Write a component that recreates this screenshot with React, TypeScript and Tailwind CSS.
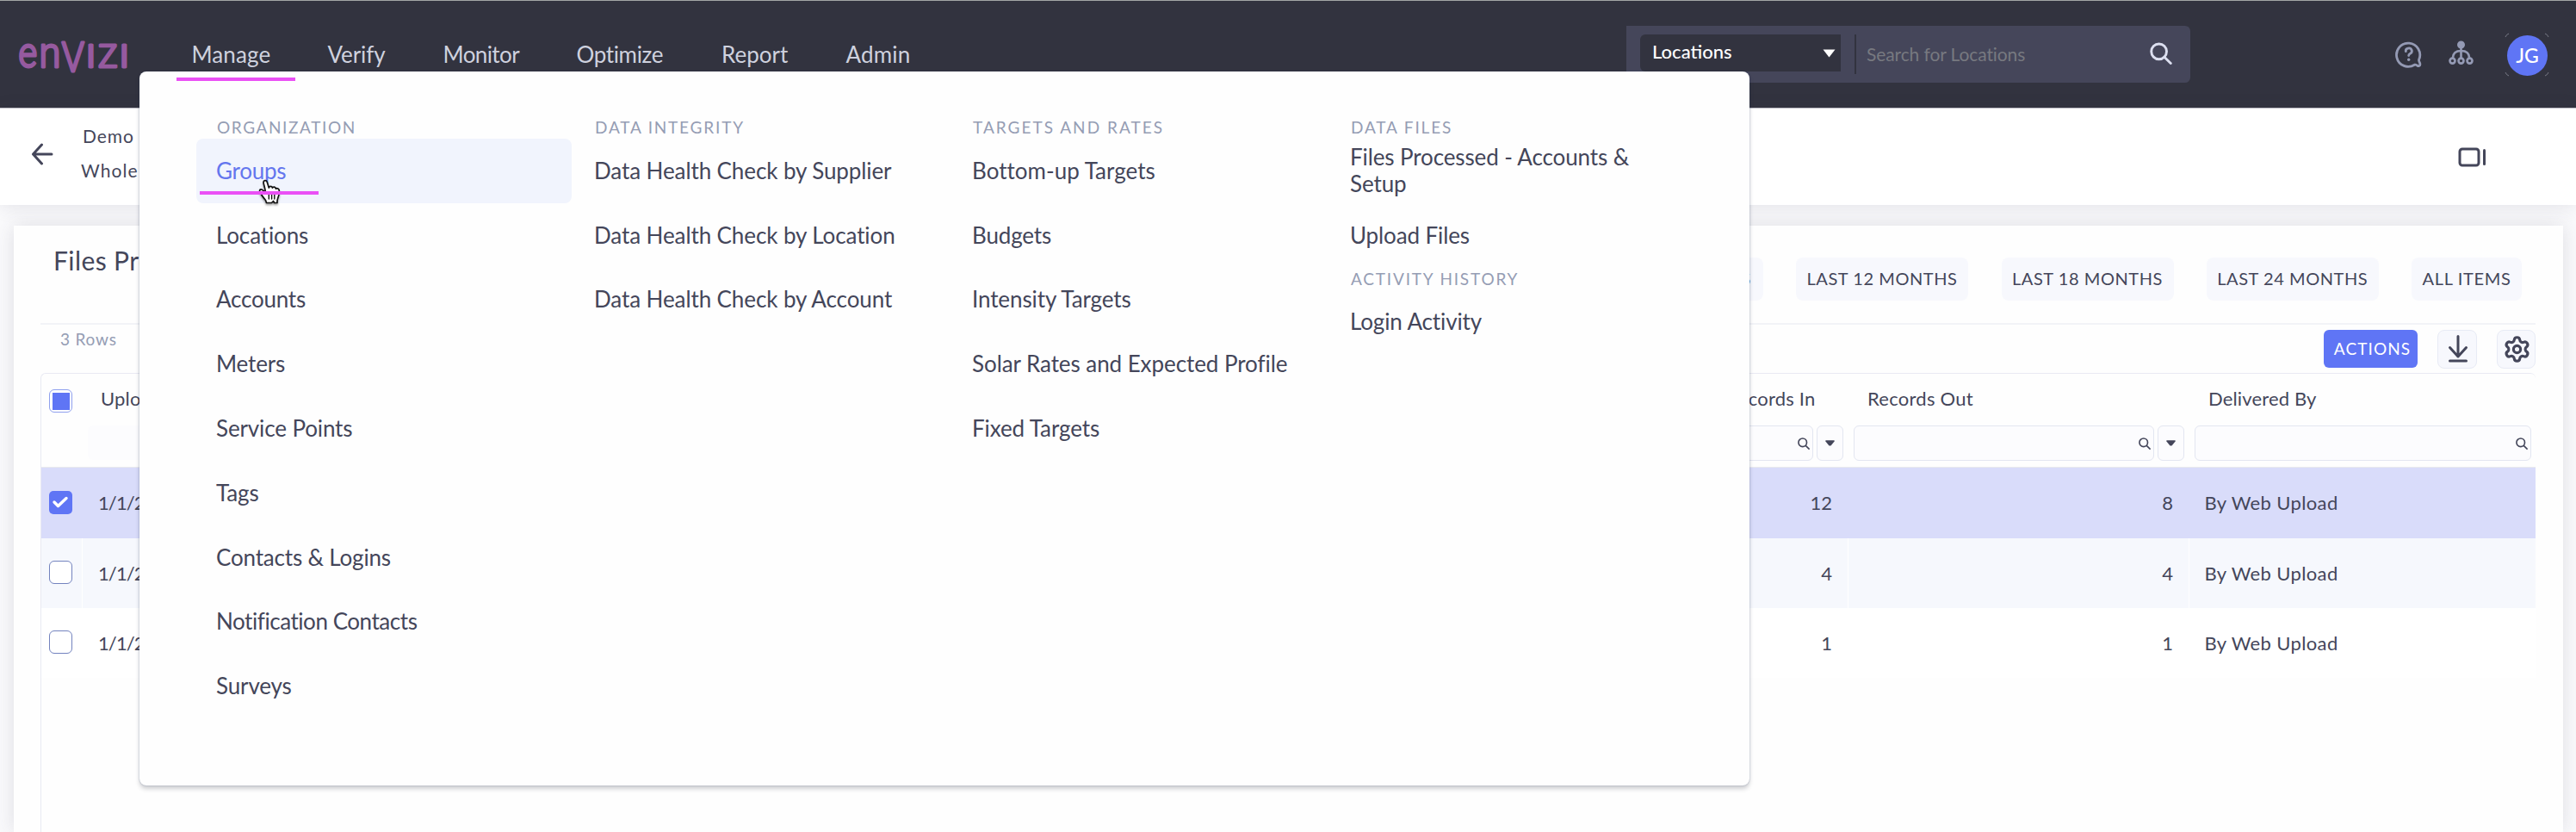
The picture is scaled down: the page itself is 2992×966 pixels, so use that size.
import type { ReactNode } from "react";
import { Settings } from "lucide-react";

type Label = { text: string; track: string };

const NAV: { text: string; cls: string }[] = [
  { text: "Manage", cls: "w-[158px] tracking-[0.1px]" },
  { text: "Verify", cls: "w-[134px] tracking-[-0.1px]" },
  { text: "Monitor", cls: "w-[155px] tracking-[-0.6px]" },
  { text: "Optimize", cls: "w-[168.5px] tracking-[-0.35px]" },
  { text: "Report", cls: "w-[144.5px]" },
  { text: "Admin", cls: "tracking-[0.2px]" },
];

type Section = { title: Label; items: Label[] };

const MENU: Section[][] = [
  [
    {
      title: { text: "ORGANIZATION", track: "tracking-[1.6px]" },
      items: [
        { text: "Groups", track: "tracking-[-0.25px]" },
        { text: "Locations", track: "tracking-[-0.14px]" },
        { text: "Accounts", track: "tracking-[-0.22px]" },
        { text: "Meters", track: "tracking-[-0.14px]" },
        { text: "Service Points", track: "tracking-[-0.13px]" },
        { text: "Tags", track: "tracking-[-0.14px]" },
        { text: "Contacts & Logins", track: "tracking-[-0.17px]" },
        { text: "Notification Contacts", track: "tracking-[-0.45px]" },
        { text: "Surveys", track: "tracking-[-0.14px]" },
      ],
    },
  ],
  [
    {
      title: { text: "DATA INTEGRITY", track: "tracking-[1.81px]" },
      items: [
        { text: "Data Health Check by Supplier", track: "tracking-[-0.1px]" },
        { text: "Data Health Check by Location", track: "tracking-[-0.1px]" },
        { text: "Data Health Check by Account", track: "tracking-[-0.1px]" },
      ],
    },
  ],
  [
    {
      title: { text: "TARGETS AND RATES", track: "tracking-[2.02px]" },
      items: [
        { text: "Bottom-up Targets", track: "tracking-[0.02px]" },
        { text: "Budgets", track: "tracking-[-0.14px]" },
        { text: "Intensity Targets", track: "tracking-[-0.1px]" },
        { text: "Solar Rates and Expected Profile", track: "tracking-[-0.07px]" },
        { text: "Fixed Targets", track: "tracking-[-0.1px]" },
      ],
    },
  ],
  [
    {
      title: { text: "DATA FILES", track: "tracking-[1.85px]" },
      items: [
        { text: "Files Processed - Accounts & Setup", track: "tracking-[-0.12px]" },
        { text: "Upload Files", track: "tracking-[-0.12px]" },
      ],
    },
    {
      title: { text: "ACTIVITY HISTORY", track: "tracking-[1.81px]" },
      items: [{ text: "Login Activity", track: "tracking-[-0.12px]" }],
    },
  ],
];

const ROWS = [
  { date: "1/1/2022", recordsIn: 12, recordsOut: 8, by: "By Web Upload", selected: true },
  { date: "1/1/2022", recordsIn: 4, recordsOut: 4, by: "By Web Upload", selected: false },
  { date: "1/1/2022", recordsIn: 1, recordsOut: 1, by: "By Web Upload", selected: false },
];

function Logo() {
  const glyphs = [
    { ch: "e", x: 21.5, y: 75.4, w: 21.5, size: 48 },
    { ch: "n", x: 45.5, y: 75.4, w: 25, size: 49 },
    { ch: "V", x: 71.5, y: 79.5, w: 26.5, size: 49 },
    { ch: "I", x: 99.5, y: 75.4, w: 12, size: 36.5 },
    { ch: "Z", x: 114, y: 75.4, w: 22.5, size: 36.5 },
    { ch: "I", x: 138.3, y: 75.4, w: 12, size: 36.5 },
  ];
  return (
    <svg width="170" height="60" viewBox="0 30 170 60" className="shrink-0 font-['Roboto',sans-serif] font-light">
      {glyphs.map((g, i) => (
        <text
          key={i}
          x={g.x}
          y={g.y}
          fontSize={g.size}
          textLength={g.w}
          lengthAdjust="spacingAndGlyphs"
          fill="#965a9f"
          stroke="#965a9f"
          strokeWidth="2.8"
          strokeLinejoin="round"
        >
          {g.ch}
        </text>
      ))}
    </svg>
  );
}

function Magnifier({ className, stroke }: { className: string; stroke: number }) {
  return (
    <svg viewBox="0 0 24 24" fill="none" stroke="currentColor" strokeWidth={stroke} strokeLinecap="round" className={className}>
      <circle cx="9.8" cy="10" r="8.2" />
      <path d="M15.8 16.2 L22.4 22.6" />
    </svg>
  );
}

function Header() {
  return (
    <header className="flex h-[126px] shrink-0 items-center border-t border-b border-t-[#a3a6a5] border-b-[#c3c3c9] bg-[#32333f]">
      <div className="w-[222.5px]">
        <Logo />
      </div>
      <nav className="flex flex-1 text-[26px] text-[#ced1de]">
        {NAV.map((n) => (
          <a key={n.text} className={n.cls}>
            {n.text}
          </a>
        ))}
      </nav>
      <div className="flex h-[66px] w-[655px] items-center rounded-r-md bg-[#45465a]">
        <div className="mb-[3px] ml-4 flex h-[43px] w-[233px] items-center justify-between rounded-l-md bg-[#32333f] pr-[6px] pl-[14px] text-[22px] text-white">
          <span className="mb-1 font-medium">Locations</span>
          <svg width="15" height="10" viewBox="0 0 15 10" fill="#ffffff">
            <path d="M0.5 0.5h14L7.5 9.5z" />
          </svg>
        </div>
        <div className="ml-[16px] h-[46px] w-[2px] bg-[#32333f]" />
        <span className="ml-[12px] flex-1 text-[21px] tracking-[-0.1px] text-[#777980]">Search for Locations</span>
        <Magnifier className="mr-[21px] mb-[2px] size-[26px] text-[#dcdff0]" stroke={2.7} />
      </div>
      <div className="flex w-[448px] items-center pl-[237px]">
        <svg width="33" height="34" viewBox="0 0 33 34" fill="none" stroke="#949ab4" strokeWidth="2.8" strokeLinecap="round" strokeLinejoin="round">
          <path d="M23.5 29.2 A13.6 13.6 0 1 1 28.6 23.2 C28 25 29.8 26.5 29.9 28.5 C30 30.8 27.8 31 26.8 30.3 Q25.2 28.6 23.5 29.2" />
          <path d="M13.3 13.6 A3.5 3.3 0 1 1 18.4 16.2 Q16.7 17 16.7 18.6" />
          <circle cx="16.7" cy="23.2" r="1.7" fill="#949ab4" stroke="none" />
        </svg>
        <svg width="32" height="34" viewBox="0 0 32 34" fill="none" stroke="#949ab4" strokeWidth="2.6" className="mb-[2px] ml-[29px]">
          <circle cx="15.5" cy="7" r="3.2" fill="#949ab4" />
          <path d="M15.5 8v14 M5.8 22.5 C6 17 9.5 14 15.5 14 C21.5 14 25 17 25.2 22.5" />
          <circle cx="5.5" cy="25.6" r="3" />
          <circle cx="15.5" cy="25.6" r="3" />
          <circle cx="25.5" cy="25.6" r="3" />
        </svg>
        <div className="relative mt-[2px] ml-[37px] flex size-[47px] items-center justify-center rounded-full bg-[#5f75f5] text-[23px] font-medium text-white">
          JG
          <svg width="52" height="52" viewBox="0 0 52 52" fill="none" stroke="#777985" strokeWidth="1" className="absolute -top-[3px] -left-[3px]">
            <path d="M1 5 Q2 2 5 1 M47 1 Q50 2 51 5 M51 46 Q50 49 47 50 M5 50 Q2 49 1 46" />
          </svg>
        </div>
      </div>
    </header>
  );
}

function SubHeader() {
  return (
    <div className="relative z-10 flex h-[112px] shrink-0 items-center bg-white pl-[36px] text-[21px] text-[#44465a] shadow-[0_2px_20px_rgba(60,60,80,0.12)]">
      <svg width="27" height="26" viewBox="0 0 27 26" fill="none" stroke="#44465a" strokeWidth="3" strokeLinecap="round" strokeLinejoin="round" className="mb-[7px] shrink-0">
        <path d="M24 13H2.5 M12.5 2L2.5 13L12.5 24" />
      </svg>
      <div className="mb-[9px] ml-[31px] flex flex-1 flex-col gap-[14px] leading-[26px] whitespace-nowrap">
        <span className="pl-[2px] tracking-[0.9px]">Demo</span>
        <span className="tracking-[1.1px]">Whole</span>
      </div>
      <svg width="34" height="26" viewBox="0 0 34 26" fill="none" stroke="#44465a" className="mt-[2px] mr-[104px]" strokeWidth="3" strokeLinecap="round">
        <rect x="3" y="3" width="22" height="19" rx="3" />
        <path d="M31.5 4.5v16" />
      </svg>
    </div>
  );
}

function RangeButton({ children, className }: { children: ReactNode; className: string }) {
  return (
    <button className={`flex h-[50px] items-center justify-center rounded-lg bg-[#f7f8fd] text-[20px] text-[#44465a] ${className}`}>
      {children}
    </button>
  );
}

function FilterInput({ className }: { className: string }) {
  return (
    <div className={`flex h-[41px] items-center justify-end rounded-md border border-[#e3e6f1] bg-[#fcfcfe] pr-[3px] text-[#44465a] ${className}`}>
      <Magnifier className="size-[14px]" stroke={2.8} />
    </div>
  );
}

function FilterMenu() {
  return (
    <div className="ml-[4px] flex h-[41px] w-[31px] items-center justify-center rounded-md border border-[#e3e6f1] bg-[#fcfcfe]">
      <svg width="11" height="7" viewBox="0 0 11 7" fill="#44465a">
        <path d="M0.4 0.3h10.2v1.2L6.5 6.5h-2L0.4 1.5z" />
      </svg>
    </div>
  );
}

function Checkbox({ checked }: { checked: boolean }) {
  return checked ? (
    <span className="flex size-[27px] items-center justify-center rounded-[5px] bg-[#5f75f5]">
      <svg width="20" height="16" viewBox="0 0 20 16" fill="none" stroke="#ffffff" strokeWidth="3.4" strokeLinecap="round" strokeLinejoin="round">
        <path d="M3 8L7.5 12.5L17 3.5" />
      </svg>
    </span>
  ) : (
    <span className="block size-[27px] rounded-[6px] border border-[#7383bf] bg-white" />
  );
}

function FilesTable() {
  return (
    <div className="flex flex-1 flex-col rounded-t-md border-t border-l border-[#e9eaf3] text-[22px] text-[#44465a]">
      <div className="flex h-[109px] border-b border-[#e9eaee]">
        <div className="flex w-[47px] justify-center pt-[18px] pr-[2px]">
          <span className="flex size-[27px] items-center justify-center rounded-[6px] border border-[#8fa0ee] bg-white">
            <span className="block size-[20px] bg-[#5f75f5]" />
          </span>
        </div>
        <div className="flex flex-1 flex-col pl-[7px]">
          <div className="h-[60px] pl-[15px] leading-[58px] tracking-[0.2px]">Upload Date</div>
          <div className="h-[40px] w-[400px] rounded-md bg-[#fcfcfe]" />
        </div>
        <div className="flex w-[396px] flex-col pl-[6px]">
          <div className="h-[60px] pl-[16px] leading-[58px] tracking-[0.2px]">
            <span className="inline-block w-[335.5px] text-right">Records In</span>
          </div>
          <div className="flex">
            <FilterInput className="w-[349px]" />
            <FilterMenu />
          </div>
        </div>
        <div className="flex w-[396px] flex-col pl-[6px]">
          <div className="h-[60px] pl-[16px] leading-[58px] tracking-[0.26px]">Records Out</div>
          <div className="flex">
            <FilterInput className="w-[349px]" />
            <FilterMenu />
          </div>
        </div>
        <div className="flex w-[402px] flex-col pl-[6px]">
          <div className="h-[60px] pl-[16px] leading-[58px] tracking-[0.15px]">Delivered By</div>
          <FilterInput className="w-[391px]" />
        </div>
      </div>
      {ROWS.map((r, i) => {
        const line = r.selected ? "border-r border-[#d9dcfa]" : "border-r border-white";
        return (
          <div
            key={i}
            className={`flex items-stretch leading-[81px] ${r.selected ? "h-[82px] bg-[#d9dcfa]" : i === 1 ? "h-[81px] bg-[#f6f8fd]" : "h-[81px] bg-white"}`}
          >
            <div className={`flex w-[48px] items-center justify-center pr-[3px] pb-[2px] ${line}`}>
              <Checkbox checked={r.selected} />
            </div>
            <div className="flex-1 pl-[18px] tracking-[-0.9px]">{r.date}</div>
            <div className={`w-[396px] pr-[18px] text-right ${line}`}>{r.recordsIn}</div>
            <div className={`w-[396px] pr-[18px] text-right ${line}`}>{r.recordsOut}</div>
            <div className="w-[402px] pl-[17.5px] tracking-[0.37px]">{r.by}</div>
          </div>
        );
      })}
    </div>
  );
}

function FilesCard() {
  return (
    <section className="mt-6 mr-[15px] ml-4 flex flex-1 flex-col bg-[#fefefe] pr-8 pl-[31px] shadow-[0_0_22px_rgba(60,60,80,0.15)]">
      <div className="flex h-[113px] items-center pr-[16px] pl-[15px]">
        <h1 className="mb-[32px] flex-1 text-[30px] tracking-[0.4px] text-[#44465a]">Files Processed</h1>
        <div className="mt-[10px] flex gap-[38.5px]">
          <RangeButton className="w-[190px] tracking-[0.56px]">LAST 6 MONTHS</RangeButton>
          <RangeButton className="w-[200px] tracking-[0.56px]">LAST 12 MONTHS</RangeButton>
          <RangeButton className="w-[200px] tracking-[0.56px]">LAST 18 MONTHS</RangeButton>
          <RangeButton className="w-[199.5px] tracking-[0.56px]">LAST 24 MONTHS</RangeButton>
          <RangeButton className="w-[128px] tracking-[0.66px]">ALL ITEMS</RangeButton>
        </div>
      </div>
      <div className="flex h-[58px] items-center border-t-2 border-[#f2f3f7]">
        <span className="mb-[22px] flex-1 pl-[23px] text-[19px] tracking-[0.8px] text-[#959db4]">3 Rows</span>
        <button className="flex h-[44px] w-[109px] items-center justify-center rounded-md bg-[#5f75f5] pl-[4px] text-[19px] tracking-[1.1px] text-white">
          ACTIONS
        </button>
        <button className="ml-[23px] flex h-[45px] w-[46px] items-center justify-center rounded-lg border border-[#e8ebf5] bg-[#f7f8fd] pl-[2px]">
          <svg width="26" height="34" viewBox="0 0 26 34" fill="none" stroke="#44465a" strokeWidth="3" strokeLinecap="round" strokeLinejoin="round">
            <path d="M13 2.5V26 M3.5 15.5L13 26L22.5 15.5 M3.5 31H22.5" />
          </svg>
        </button>
        <button className="ml-[23px] flex h-[45px] w-[45px] items-center justify-center rounded-lg border border-[#e8ebf5] bg-[#f7f8fd] pl-[2px]">
          <Settings size={33} strokeWidth={2.3} color="#44465a" />
        </button>
      </div>
      <FilesTable />
    </section>
  );
}

function MegaMenu() {
  return (
    <div className="absolute top-[83px] left-[162px] z-20 flex h-[829px] w-[1870px] gap-[3px] rounded-lg bg-[#fefefe] pt-[52.4px] pl-[66px] shadow-[0_0_2px_rgba(40,60,110,0.35),0_4px_5px_rgba(40,45,60,0.22)]">
      {MENU.map((column, c) => (
        <div key={c} className="w-[436px]">
          {column.map((s) => (
            <div key={s.title.text}>
              <div className={`h-[25.6px] pl-[24px] text-[19px] leading-[25.6px] text-[#959db4] ${s.title.track}`}>{s.title.text}</div>
              {s.items.map((it) => (
                <a
                  key={it.text}
                  className={`flex h-[74.8px] items-center rounded-lg pr-[30px] pl-[23px] text-[26px] leading-[31.3px] ${it.track} ${
                    it.text === "Groups" ? "bg-[#f1f4fd] text-[#6476ee]" : "text-[#44465a]"
                  }`}
                >
                  {it.text}
                </a>
              ))}
            </div>
          ))}
        </div>
      ))}
    </div>
  );
}

function HandCursor() {
  return (
    <svg width="30" height="32" viewBox="0 0 30 32" className="absolute top-[207px] left-[298px] z-30 drop-shadow-[0_2px_1px_rgba(0,0,0,0.35)]">
      <path
        d="M11.5 28.5 L10.5 25.5 C8 22.5 6 20 4.5 17 C3 14.5 3.5 13 5 12.8 C6.8 12.6 8 14.2 10.3 16.8 C10.5 13 8.3 7.5 8 4.8 C7.8 2.6 11.2 1.4 12.2 4.2 C13 6.5 13.6 9 14.3 11 C14.6 9 18 8.8 18.4 11.2 C19.2 9.4 22.2 9.8 22.4 12.2 C24 11 26.2 12.2 26.3 14.3 C26.5 18 26 20.5 24.6 23.5 C23.8 25.2 24 26.5 24 28.5 L20.5 28.5 L19.5 26.5 L17.5 28.5 Z"
        fill="#ffffff"
        stroke="#111111"
        strokeWidth="1.7"
        strokeLinejoin="round"
      />
      <path d="M14.3 17v7 M17.6 17v7 M20.8 17v7" stroke="#111111" strokeWidth="1.4" strokeLinecap="round" />
    </svg>
  );
}

export default function App() {
  return (
    <div className="relative flex h-[966px] w-full flex-col overflow-hidden bg-[#fafafc] font-['Lato','Noto_Sans',sans-serif] leading-tight">
      <Header />
      <SubHeader />
      <FilesCard />
      <MegaMenu />
      <HandCursor />
      <div className="absolute top-[90px] left-[205px] z-40 h-1 w-[138px] bg-[#ea50f5]" />
      <div className="absolute top-[222px] left-[232px] z-40 h-1 w-[138px] bg-[#ea50f5]" />
    </div>
  );
}
